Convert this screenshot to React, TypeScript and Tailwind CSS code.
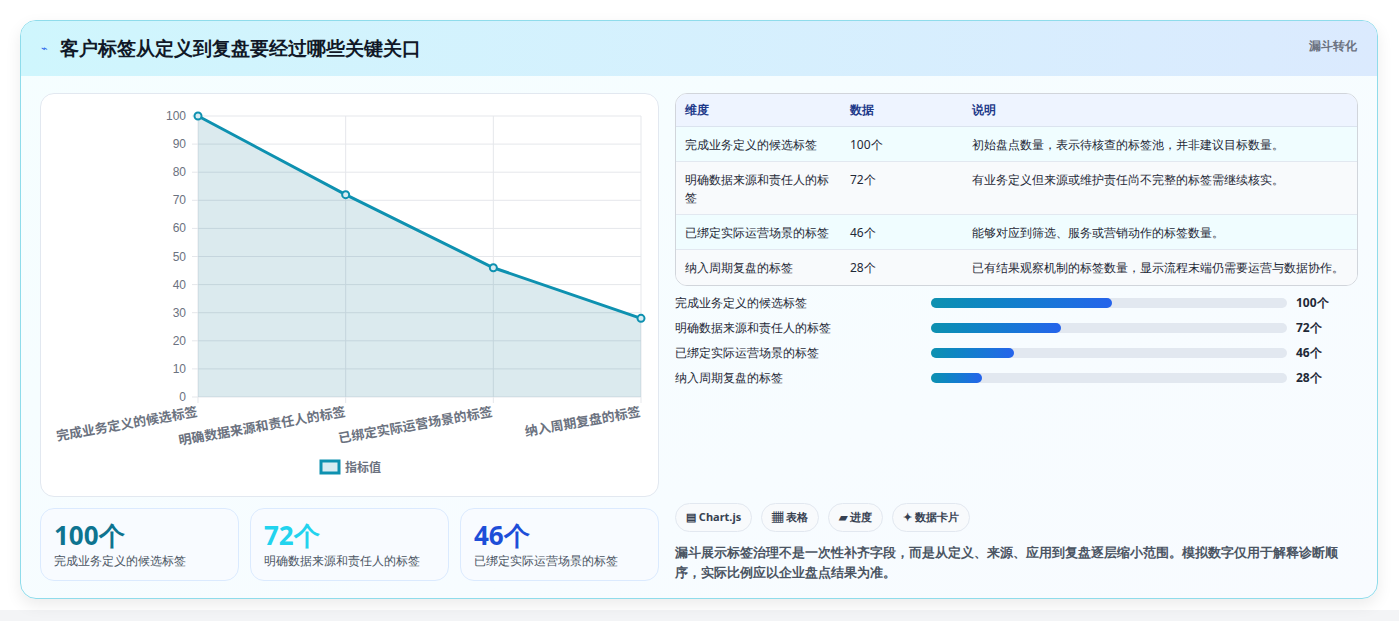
import React from "react";

const pts = [100, 72, 46, 28];
const labels = ["完成业务定义的候选标签", "明确数据来源和责任人的标签", "已绑定实际运营场景的标签", "纳入周期复盘的标签"];
const descs = [
  "初始盘点数量，表示待核查的标签池，并非建议目标数量。",
  "有业务定义但来源或维护责任尚不完整的标签需继续核实。",
  "能够对应到筛选、服务或营销动作的标签数量。",
  "已有结果观察机制的标签数量，显示流程末端仍需要运营与数据协作。",
];

function Chart() {
  const x0 = 157, x1 = 600, y0 = 22, y1 = 303;
  const xs = pts.map((_, i) => x0 + ((x1 - x0) / 3) * i);
  const ys = pts.map((v) => y1 - ((y1 - y0) * v) / 100);
  const line = xs.map((x, i) => `${x},${ys[i]}`).join(" ");
  return (
    <svg width="619" height="403" viewBox="0 0 619 403" style={{ fontFamily: "'Liberation Sans','Noto Sans CJK SC',sans-serif" }}>
      {Array.from({ length: 11 }).map((_, i) => {
        const y = y1 - ((y1 - y0) * i) / 10;
        return (
          <g key={i}>
            <line x1={x0 - 6} x2={x1} y1={y} y2={y} stroke="#e5e7eb" />
            <text x={x0 - 12} y={y + 4} textAnchor="end" fontSize="12" fill="#6b7280">{i * 10}</text>
          </g>
        );
      })}
      {xs.map((x, i) => (
        <line key={i} x1={x} x2={x} y1={y0} y2={y1 + 6} stroke="#e5e7eb" />
      ))}
      <polygon points={`${x0},${y1} ${line} ${x1},${y1}`} fill="#0e7490" fillOpacity="0.15" />
      <polyline points={line} fill="none" stroke="#0e91b0" strokeWidth="3" />
      {xs.map((x, i) => (
        <circle key={i} cx={x} cy={ys[i]} r="3.5" fill="#d8ecf2" stroke="#0e91b0" strokeWidth="2" />
      ))}
      {labels.map((l, i) => {
        const x = [157, 305, 452, 600][i];
        return (
          <text key={i} x={x} y={322} textAnchor="end" fontSize="13" fontWeight="bold" fill="#6b7280" transform={`rotate(-10 ${x} 322)`}>{l}</text>
        );
      })}
      <rect x="280" y="367" width="18" height="12" fill="#d8ecf2" stroke="#0e91b0" strokeWidth="3" />
      <text x="304" y="378" fontSize="12" fill="#6b7280" fontWeight="bold">指标值</text>
    </svg>
  );
}

export default function App() {
  const F = "font-['Liberation_Sans','Noto_Sans_CJK_SC',sans-serif]";
  return (
    <div className={`w-[1399px] h-[621px] bg-[#f3f4f6] ${F}`}>
      <div className="h-[610px] bg-white pt-[20px] px-[20px]">
        <div className="w-[1358px] h-[579px] rounded-[16px] border border-[#8fdceb] overflow-hidden bg-gradient-to-br from-[#f5feff] to-[#f8fbff] shadow-[0_6px_16px_rgba(0,0,0,0.08)]">
          <div className="h-[55px] bg-gradient-to-r from-[#cff6fd] to-[#dbeafe] flex items-center justify-between px-[20px]">
            <div className="flex items-center gap-[12px]">
              <span className="text-[11px] text-[#2563eb]">⌁</span>
              <span className="text-[19px] font-bold text-[#111827]">客户标签从定义到复盘要经过哪些关键关口</span>
            </div>
            <span className="text-[12px] font-bold text-[#6b7280] self-start mt-[16px]">漏斗转化</span>
          </div>
          <div className="flex gap-[16px] px-[19px] pt-[17px]">
            <div className="w-[619px] flex flex-col gap-[11px]">
              <div className="h-[404px] rounded-[14px] border border-[#e2e8f0] bg-white">
                <Chart />
              </div>
              <div className="flex gap-[11px]">
                {[["100个", "text-[#0e7490]", labels[0]], ["72个", "text-[#22d3ee]", labels[1]], ["46个", "text-[#1d4ed8]", labels[2]]].map(([n, c, l], i) => (
                  <div key={i} className="w-[199px] h-[73px] rounded-[14px] border border-[#dbeafe] bg-[#f8fbff] px-[13px] pt-[10px]">
                    <div className={`text-[26px] leading-[32px] font-bold ${c}`}>{n}</div>
                    <div className="text-[12px] text-[#4b5563] mt-[1px]">{l}</div>
                  </div>
                ))}
              </div>
            </div>
            <div className="w-[686px] flex flex-col">
              <div className="rounded-[12px] border border-[#d1d5db] overflow-hidden bg-white text-[12px] text-[#1f2937]">
                <div className="flex h-[33px] items-center bg-[#eef4ff] text-[#1e3a8a] font-bold border-b border-[#dbe3ef]">
                  <div className="w-[174px] pl-[9px]">维度</div>
                  <div className="w-[122px]">数据</div>
                  <div>说明</div>
                </div>
                {labels.map((l, i) => (
                  <div key={i} className={`flex ${i === 1 ? "h-[53px]" : "h-[35px]"} pt-[9px] ${i % 2 ? "bg-[#f8fafc]" : "bg-[#f0fdff]"} ${i < 3 ? "border-b border-[#e2e8f0]" : ""}`}>
                    <div className="w-[174px] pl-[9px] pr-[10px] leading-[18px]">{l}</div>
                    <div className="w-[122px] leading-[18px]">{pts[i]}个</div>
                    <div className="leading-[18px]">{descs[i]}</div>
                  </div>
                ))}
              </div>
              <div className="flex flex-col gap-[7px] mt-[8px]">
                {labels.map((l, i) => (
                  <div key={i} className="flex items-center h-[18px] text-[12px] text-[#1f2937]">
                    <div className="w-[256px]">{l}</div>
                    <div className="w-[356px] h-[10px] rounded-full bg-[#e2e8f0]">
                      <div className="h-full rounded-full bg-gradient-to-r from-[#0e91b0] to-[#2563eb]" style={{ width: `${pts[i] * 0.508}%` }} />
                    </div>
                    <div className="ml-[9px] font-bold">{pts[i]}个</div>
                  </div>
                ))}
              </div>
              <div className="flex gap-[9px] mt-[116px] text-[11px] font-bold text-[#374151]">
                {["▤ Chart.js", "▦ 表格", "▰ 进度", "✦ 数据卡片"].map((t) => (
                  <div key={t} className="h-[29px] px-[10px] rounded-full border border-[#e2e8f0] bg-[#f8fafc] flex items-center">{t}</div>
                ))}
              </div>
              <p className="mt-[10px] text-[13px] leading-[20px] text-[#4b5563] font-semibold pr-[20px]">
                漏斗展示标签治理不是一次性补齐字段，而是从定义、来源、应用到复盘逐层缩小范围。模拟数字仅用于解释诊断顺序，实际比例应以企业盘点结果为准。
              </p>
            </div>
          </div>
        </div>
      </div>
    </div>
  );
}
